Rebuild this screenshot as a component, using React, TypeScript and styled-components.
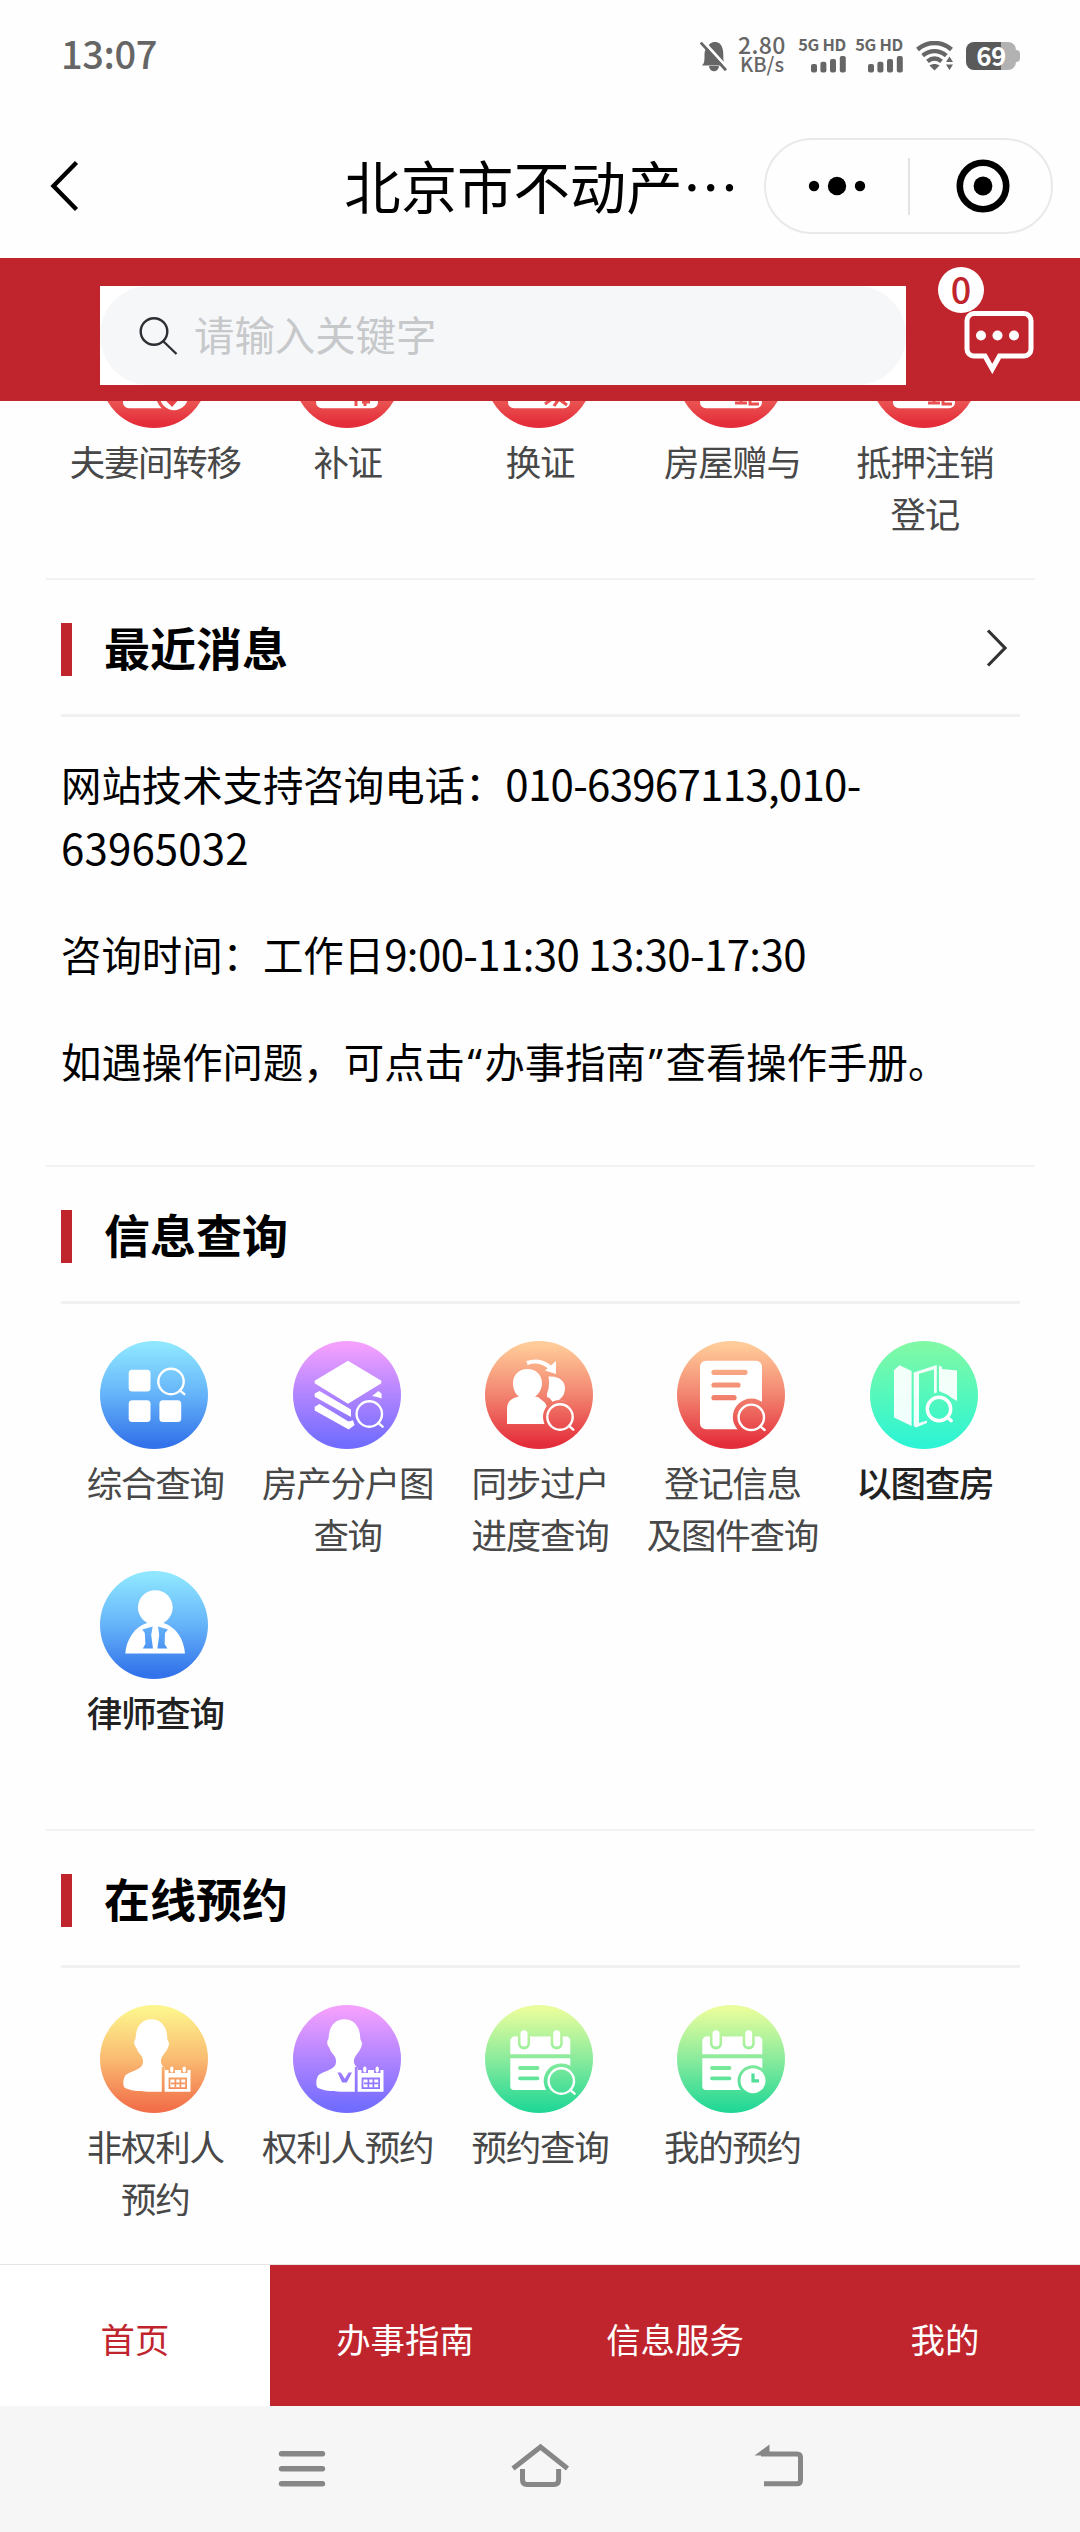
import React, { useId } from "react";
import styled, { createGlobalStyle } from "styled-components";

const RED = "#c0252e";
const CJK = '"Noto Sans CJK SC", "Noto Sans", sans-serif';

const GlobalStyle = createGlobalStyle`
  * { box-sizing: border-box; }
  html, body { margin: 0; padding: 0; background: #fff; }
  body { font-family: ${CJK}; color: #000; }
  p, h1, h2 { margin: 0; font-weight: 400; }
  svg { display: block; }
`;

const Screen = styled.div`
  width: 1080px;
  height: 2532px;
  display: flex;
  flex-direction: column;
  overflow: hidden;
  background: #fefefe;
`;

/* ---------- status bar ---------- */

const StatusBar = styled.div`
  height: 114px;
  padding: 0 60px 0 61px;
  display: flex;
  justify-content: space-between;
  align-items: flex-start;
  color: #666;
`;

const Clock = styled.div`
  margin-top: 27px;
  font-size: 38px;
  line-height: 52px;
  font-weight: 500;
  letter-spacing: -0.4px;
`;

const StatusIcons = styled.div`
  display: flex;
  padding-top: 35px;
  height: 80px;
`;

const NetSpeed = styled.div`
  width: 48px;
  margin-left: 11px;
  text-align: center;
  font-weight: 500;
  white-space: nowrap;
`;

const SpeedValue = styled.div`
  font-size: 23px;
  line-height: 18px;
  letter-spacing: 0.4px;
`;

const SpeedUnit = styled.div`
  font-size: 20px;
  line-height: 22px;
`;

const Signal = styled.div<{ $gap: number }>`
  width: 48px;
  margin-left: ${(p) => p.$gap}px;
  display: flex;
  flex-direction: column;
  align-items: flex-end;
`;

const SignalLabel = styled.div`
  font: 700 16.4px/19px ${CJK};
  white-space: nowrap;
  letter-spacing: -0.3px;
`;

const Battery = styled.div`
  width: 50px;
  height: 28px;
  margin: 7px 0 0 12px;
  border-radius: 8px;
  background: linear-gradient(90deg, #5a5a5a 71%, #b2b2b2 71%);
  color: #fff;
  font: 700 26px/26px ${CJK};
  letter-spacing: -0.5px;
  text-align: center;
`;

const BatteryTip = styled.div`
  width: 4px;
  height: 12px;
  margin-top: 15px;
  border-radius: 0 4px 4px 0;
  background: #b2b2b2;
`;

/* ---------- title bar ---------- */

const TitleBar = styled.header`
  height: 144px;
  display: flex;
  align-items: center;
  padding: 0 27px 0 46px;
`;

const PageTitle = styled.h1`
  margin: -2px 25px 0 auto;
  font-size: 56.4px;
  line-height: 80px;
`;

const Capsule = styled.div`
  width: 289px;
  height: 96px;
  border: 2px solid #e9e9e9;
  border-radius: 48px;
  display: grid;
  grid-template-columns: 1fr 2px 1fr;
  align-items: center;
  justify-items: center;
`;

const CapsuleDivider = styled.span`
  width: 2px;
  height: 57px;
  background: #e3e3e3;
`;

const CapsuleClose = styled.svg`
  margin-left: 5px;
`;

/* ---------- search ---------- */

const SearchBar = styled.div`
  height: 143px;
  flex: none;
  background: ${RED};
  display: flex;
  padding: 28px 0 0 100px;
`;

const SearchBox = styled.div`
  width: 806px;
  height: 99px;
  background: #fff;
`;

const SearchField = styled.div`
  height: 99px;
  border-radius: 50px;
  background: #f6f7f9;
  display: flex;
  align-items: center;
  gap: 16px;
  padding-left: 38px;
  color: #c6c8ca;
  font-size: 40.4px;
`;

const Placeholder = styled.span`
  line-height: 58px;
  margin-top: -4px;
`;

const MessageButton = styled.div`
  position: relative;
  margin: 25px 0 0 58px;
  width: 70px;
  height: 63px;
`;

const MessageBadge = styled.span`
  position: absolute;
  left: -26px;
  top: -44px;
  width: 46px;
  height: 46px;
  border-radius: 50%;
  background: #fff;
  color: ${RED};
  font-size: 36px;
  line-height: 42px;
  font-weight: 500;
  text-align: center;
`;

/* ---------- content ---------- */

const Content = styled.main`
  height: 1863px;
  flex: none;
  overflow: hidden;
  padding: 0 45px 0 46px;
`;

const HiddenTopGrid = styled.div`
  height: 177px;
  padding: 0 15px 0 12px;
  display: flex;
  align-items: flex-end;
`;

const Section = styled.section<{ $height: number }>`
  height: ${(p) => p.$height}px;
  border-top: 2px solid #f2f2f2;
  padding: 0 15px;
`;

const SectionHead = styled.div`
  height: 137px;
  border-bottom: 3px solid #f1f1f1;
  padding: 5px 13px 0 0;
  display: flex;
  align-items: center;
`;

const Accent = styled.span`
  width: 11px;
  height: 53px;
  background: ${RED};
`;

const SectionTitle = styled.h2`
  margin: -8px auto 0 32px;
  font-size: 46px;
  line-height: 60px;
  font-weight: 700;
`;

const News = styled.div`
  padding-top: 35px;
  display: flex;
  flex-direction: column;
  gap: 43px;
  font-size: 40.4px;
  line-height: 63.5px;
`;

const Num = styled.span<{ $spacing: number }>`
  font-size: 42px;
  line-height: 1;
  letter-spacing: ${(p) => p.$spacing}px;
`;

const Quote = styled.span`
  font-family: "Noto Sans", sans-serif;
  padding: 0 2.5px;
`;

const Grid = styled.div<{ $top: number }>`
  margin-left: -3px;
  padding-top: ${(p) => p.$top}px;
  display: grid;
  grid-template-columns: repeat(5, 192.4px);
  row-gap: 9px;
`;

const TopGrid = styled(Grid)`
  margin: 0;
  height: 258px;
`;

const Cell = styled.div`
  height: 221px;
  display: flex;
  flex-direction: column;
  align-items: center;
`;

const CellLabel = styled.div<{ $dark?: boolean }>`
  margin-top: 7px;
  padding-left: 2px;
  font-size: 35.5px;
  line-height: 52.4px;
  letter-spacing: -1.3px;
  text-align: center;
  white-space: pre-line;
  font-weight: ${(p) => (p.$dark ? 500 : 400)};
  color: ${(p) => (p.$dark ? "#222" : "#484848")};
`;

/* ---------- bottom ---------- */

const Tabs = styled.nav`
  height: 142px;
  flex: none;
  border-top: 1px solid #e8e4e4;
  display: grid;
  grid-template-columns: repeat(4, 1fr);
`;

const Tab = styled.div<{ $active?: boolean }>`
  display: flex;
  align-items: center;
  justify-content: center;
  padding-top: 5px;
  font-size: 34.4px;
  background: ${(p) => (p.$active ? "#fff" : RED)};
  color: ${(p) => (p.$active ? RED : "#fff")};
`;

const SystemNav = styled.div`
  flex: 1;
  background: #f6f6f6;
  display: flex;
  justify-content: center;
  gap: 179px;
  padding-top: 32px;
`;

/* ---------- icons ---------- */

const palettes = {
  blue: ["#8ee6ff", "#65b3f9", "#3272ea"],
  purple: ["#f3a0fd", "#b084ff", "#716cff"],
  red: ["#ffcb98", "#f28470", "#e42d3a"],
  teal: ["#80f9a6", "#55f8bc", "#2df4d4"],
  orange: ["#fdf48c", "#f9bb72", "#f26f49"],
  green: ["#e8fd9c", "#8aeb9c", "#23d896"],
};
type Palette = keyof typeof palettes;

function Lens({ x, y, r = 12.7, w = 2.4 }: { x: number; y: number; r?: number; w?: number }) {
  return (
    <g fill="none" stroke="#fff" strokeWidth={w} strokeLinecap="round">
      <circle cx={x} cy={y} r={r} />
      <path d={`M${x + r * 0.7} ${y + r * 0.7}L${x + r + 0.6} ${y + r}`} />
    </g>
  );
}

function Disc({
  tone,
  hole,
  cut,
  over,
  children,
}: {
  tone: Palette;
  hole?: [number, number, number];
  cut?: React.ReactNode;
  over?: React.ReactNode;
  children: React.ReactNode;
}) {
  const id = useId().replace(/[^a-zA-Z0-9]/g, "");
  const [a, b, c] = palettes[tone];
  return (
    <svg width="108" height="108" viewBox="0 0 108 108">
      <defs>
        <linearGradient id={`g${id}`} x1="0" y1="0" x2="0" y2="1">
          <stop offset="0.04" stopColor={a} />
          <stop offset="0.5" stopColor={b} />
          <stop offset="0.96" stopColor={c} />
        </linearGradient>
        <mask id={`m${id}`} maskUnits="userSpaceOnUse" x="0" y="0" width="108" height="108">
          <rect width="108" height="108" fill="#fff" />
          {hole && <circle cx={hole[0]} cy={hole[1]} r={hole[2]} fill="#000" />}
          {cut}
        </mask>
      </defs>
      <circle cx="54" cy="54" r="54" fill={`url(#g${id})`} />
      <g fill="#fff" mask={`url(#m${id})`}>
        {children}
      </g>
      {over}
    </svg>
  );
}

const DocIcon = ({ mark }: { mark: string }) => (
  <Disc tone="red" cut={<path d={mark} fill="none" stroke="#000" strokeWidth="3" />}>
    <rect x="23" y="20" width="62" height="68.3" rx="6" />
  </Disc>
);

const CoupleIcon = () => (
  <Disc
    tone="red"
    hole={[74, 75, 18]}
    over={
      <>
        <circle cx="74" cy="76" r="14.2" fill="#fff" />
        <path d="M66 78l6 6 9-10" fill="none" stroke="#e9444a" strokeWidth="4" />
      </>
    }
  >
    <rect x="23" y="20" width="62" height="68.3" rx="6" />
  </Disc>
);

const OverviewIcon = () => (
  <Disc tone="blue" over={<Lens x={71} y={40.5} />}>
    <rect x="28.7" y="28.7" width="21.8" height="21.8" rx="3.5" />
    <rect x="28.7" y="59.3" width="21.8" height="21.8" rx="3.5" />
    <rect x="59.4" y="59.3" width="21.8" height="21.8" rx="3.5" />
  </Disc>
);

const LayersIcon = () => (
  <Disc tone="purple" over={<Lens x={76.3} y={73} />}>
    <path
      d="M55 20.5L87.6 40.2V42L55 62L22.4 42V40.2Z"
      stroke="#fff"
      strokeWidth="1.4"
      strokeLinejoin="round"
    />
    <path d="M26.5 50L58 68.6V76L21.7 55.8V52.6Z" />
    <path d="M26.5 63L55.5 80.5L60 79.3L61.6 84L55.7 88.6L21.7 69.5V65.8Z" />
    <path d="M79 55L85.5 50L88.6 52.8V57.5L84 56Z" />
  </Disc>
);

const TransferIcon = () => (
  <Disc
    tone="red"
    hole={[75, 76, 17]}
    cut={
      <g fill="none" stroke="#000" strokeWidth="4">
        <path d="M57.5 27C64 35 64 49 57 57L66 64" strokeWidth="3.5" />
      </g>
    }
    over={
      <>
        <path d="M42 22C52 18.5 62 21.5 68 30" fill="none" stroke="#fff" strokeWidth="4" />
        <path d="M71 20V33L60 29.5Z" fill="#fff" />
        <Lens x={75} y={76} />
      </>
    }
  >
    <path d="M42.5 28C51 28 57 34 57 42C57 48 54 53 50 55.5C57 56.5 61 61 62 67V83H22V68C22 61 26 57 34 55.5C30 53 28 48 28 42C28 34 34 28 42.5 28Z" />
    <path d="M62 36C73 34 80 40 80 47C80 53 77 57 74 58.5L82 60.5L68 62C66 58 64 56 62 56Z" />
  </Disc>
);

const RecordIcon = () => (
  <Disc
    tone="red"
    hole={[74.3, 76, 18.5]}
    cut={
      <g stroke="#000" strokeWidth="5.2" strokeLinecap="round">
        <path d="M37 31.3H68M37 44H61M37 56.7H57" />
      </g>
    }
    over={<Lens x={74.3} y={76.3} />}
  >
    <rect x="23" y="19.7" width="62" height="68.6" rx="6" />
  </Disc>
);

const MapIcon = () => (
  <Disc tone="teal" hole={[69, 68, 16.5]} over={<Lens x={69} y={68} r={11.7} w={3.4} />}>
    <g opacity="0.92">
      <path d="M24 29L29.6 24.2L41.6 30V85L24 76.5Z" />
      <path d="M43.7 31.5L66.8 24V56H64V28.5L49 32.8V82L57 79.5V82L46 86.5L43.7 85Z" />
      <path d="M69 24.5L72 26V28L87 29.5V60L69 50Z" />
    </g>
  </Disc>
);

const LawyerIcon = () => (
  <Disc
    tone="blue"
    cut={
      <g fill="#000">
        <path d="M42.2 58.5L52.7 55.5L51.2 64L53 77.5H42.8L45.4 73L44.8 62Z" />
        <path d="M58 55.5L68 58.5L65 62L64.6 73L67.4 77.5H57.4L59.2 64Z" />
      </g>
    }
  >
    <ellipse cx="55.3" cy="36.5" rx="17.4" ry="17.2" />
    <path d="M47 45H63.5V52C76 56 84 68 85 82.5H25.3C26.5 68 35 55.5 47 52Z" />
  </Disc>
);

const PersonCalendarIcon = ({ tone, collar }: { tone: Palette; collar?: boolean }) => (
  <Disc
    tone={tone}
    cut={
      <>
        <path d="M63 62V88" stroke="#000" strokeWidth="2.4" />
        {collar && <path d="M44.5 67.5H47.8L51.8 73.8L55.5 67.5H59L53.8 77.5H49.2Z" fill="#000" />}
        <path
          d="M68.6 72.6H87V84H68.6ZM70.4 74.4V82.3H85.2V74.4Z"
          fill="#000"
          fillRule="evenodd"
        />
        <path d="M71 78.4H85M75.4 74V82.5M80.4 74V82.5" stroke="#000" strokeWidth="1.7" />
      </>
    }
  >
    <path d="M51.5 14.3C61 14.3 67.2 22 67.2 33C67.2 36 69.7 36 68.8 40C68 44 66 46 64 49C60.7 53 60 57 62 60L64.5 63V86.7H48C38 86.5 30 85.5 25 83C22.5 81.5 23 74 25 71C29 65.5 43.5 66 43 56C43 50 38 49 36.5 43C34.5 41 33 37 35.5 34C36 21 42 14.3 51.5 14.3Z" />
    <path d="M65 65H68.5V68H75V65H81V68H87.5V65H90.5V86.8H65Z" />
    <ellipse cx="71.8" cy="64.5" rx="1.7" ry="3.1" />
    <ellipse cx="84.2" cy="64.5" rx="1.7" ry="3.1" />
  </Disc>
);

const CalendarIcon = ({ clock }: { clock?: boolean }) => (
  <Disc
    tone="green"
    hole={clock ? [76, 75.7, 15.4] : [76.3, 76, 17.6]}
    cut={
      <g stroke="#000" strokeLinecap="round">
        <path d="M39 27V38.5M71.7 27V38.5" strokeWidth="12" />
        <path d="M35 63H52.5M35 73.3H52.5" strokeWidth="3.8" />
      </g>
    }
    over={
      <>
        <path
          d="M39 28.8V38M71.7 28.8V38"
          stroke="#fff"
          strokeWidth="7"
          strokeLinecap="round"
        />
        {clock ? (
          <>
            <circle cx="76" cy="75.7" r="12.5" fill="#fff" />
            <path d="M76 68.5V75.8H82" fill="none" stroke="#4fdd98" strokeWidth="3.2" />
          </>
        ) : (
          <Lens x={76.3} y={76} />
        )}
      </>
    }
  >
    <path d="M28 31.5H83L85.3 34.5V49.3H25.3V34.5Z" />
    <path d="M25.3 53.2H85.3V85H29C26.5 85 25.3 83.5 25.3 81.5Z" />
  </Disc>
);

const BellSvg = styled.svg`
  margin-top: 5px;
`;

const BellOff = () => (
  <BellSvg width="27" height="32" viewBox="0 0 27 32">
    <path
      d="M2 25.5C4.5 23 4.5 21 4.5 15C4.5 9 7.5 5.7 11 3C13 1.5 17 1.5 19 3C22 5.5 23.3 9 23.3 15C23.3 21 23.6 23 26 25.5Z"
      fill="#666"
    />
    <path d="M9 26H19C18.5 33 9.5 33 9 26Z" fill="#666" />
    <path d="M2.5 0.5L28 28.5" stroke="#fff" strokeWidth="3" />
    <path d="M0.8 2.6L26 30.2" stroke="#666" strokeWidth="2.8" />
  </BellSvg>
);

const BarsSvg = styled.svg`
  margin-top: 1px;
`;

const SignalBars = () => (
  <BarsSvg width="35" height="18" viewBox="0 0 35 18" fill="#666">
    <rect x="0" y="9" width="6" height="8.5" rx="2" />
    <rect x="9.4" y="6.8" width="6" height="10.7" rx="2" />
    <rect x="19" y="4" width="6" height="13.5" rx="2" />
    <rect x="28.8" y="1" width="6" height="16.5" rx="2" />
  </BarsSvg>
);

const WifiSvg = styled.svg`
  margin: 6px 0 0 13px;
`;

const Wifi = () => (
  <WifiSvg width="38" height="30" viewBox="0 0 38 30" fill="none" stroke="#666" strokeWidth="4.4">
    <path d="M1.5 8.5C11.5 -0.2 25.5 -0.2 35.5 8.5" />
    <path d="M6.7 14.6C14 8.6 23 8.6 30.3 14.6" />
    <path d="M11.5 20.4C16 16.8 21 16.8 25.5 20.4" />
    <path d="M18.5 29.5L13.5 24.6C16.5 22.6 20.5 22.6 23.5 24.6Z" fill="#666" stroke="none" />
    <path d="M33.5 15.5L37 21H30ZM33.5 29L37 23.5H30Z" fill="#666" stroke="none" />
  </WifiSvg>
);

type Item = { label: string; icon: React.ReactNode; dark?: boolean };

const transferItems: Item[] = [
  { label: "夫妻间转移", icon: <CoupleIcon /> },
  { label: "补证", icon: <DocIcon mark="M63 78V86M72 78V86M69 82H77" /> },
  { label: "换证", icon: <DocIcon mark="M60 84L67 79M70 80H80M74 79L69 86M75 80L82 85" /> },
  { label: "房屋赠与", icon: <DocIcon mark="M58 83H70M64 79V84M73 80V84H82" /> },
  { label: "抵押注销\n登记", icon: <DocIcon mark="M58 83H70M64 79V84M73 80V84H82" /> },
];

const queryItems: Item[] = [
  { label: "综合查询", icon: <OverviewIcon /> },
  { label: "房产分户图\n查询", icon: <LayersIcon /> },
  { label: "同步过户\n进度查询", icon: <TransferIcon /> },
  { label: "登记信息\n及图件查询", icon: <RecordIcon /> },
  { label: "以图查房", icon: <MapIcon />, dark: true },
  { label: "律师查询", icon: <LawyerIcon />, dark: true },
];

const bookingItems: Item[] = [
  { label: "非权利人\n预约", icon: <PersonCalendarIcon tone="orange" /> },
  { label: "权利人预约", icon: <PersonCalendarIcon tone="purple" collar /> },
  { label: "预约查询", icon: <CalendarIcon /> },
  { label: "我的预约", icon: <CalendarIcon clock /> },
];

const Cells = ({ items }: { items: Item[] }) => (
  <>
    {items.map((it) => (
      <Cell key={it.label}>
        {it.icon}
        <CellLabel $dark={it.dark}>{it.label}</CellLabel>
      </Cell>
    ))}
  </>
);

const MoreArrow = styled.svg`
  margin-top: -3px;
`;

const Head = ({ title, more }: { title: string; more?: boolean }) => (
  <SectionHead>
    <Accent />
    <SectionTitle>{title}</SectionTitle>
    {more && (
      <MoreArrow width="21" height="38" viewBox="0 0 21 38" fill="none" stroke="#333" strokeWidth="3.2">
        <path d="M2 1.5L19 19L2 36.5" />
      </MoreArrow>
    )}
  </SectionHead>
);

export default function App() {
  return (
    <Screen lang="zh-CN">
      <GlobalStyle />
      <StatusBar>
        <Clock>13:07</Clock>
        <StatusIcons>
          <BellOff />
          <NetSpeed>
            <SpeedValue>2.80</SpeedValue>
            <SpeedUnit>KB/s</SpeedUnit>
          </NetSpeed>
          <Signal $gap={12}>
            <SignalLabel>5G HD</SignalLabel>
            <SignalBars />
          </Signal>
          <Signal $gap={9}>
            <SignalLabel>5G HD</SignalLabel>
            <SignalBars />
          </Signal>
          <Wifi />
          <Battery>69</Battery>
          <BatteryTip />
        </StatusIcons>
      </StatusBar>

      <TitleBar>
        <svg width="36" height="52" viewBox="0 0 36 52" fill="none" stroke="#000" strokeWidth="4.4">
          <path d="M30.5 2.5L7.5 26L30.5 49.5" />
        </svg>
        <PageTitle>北京市不动产…</PageTitle>
        <Capsule>
          <svg width="58" height="20" viewBox="0 0 58 20">
            <circle cx="6" cy="10" r="5.2" />
            <circle cx="29" cy="10" r="9.2" />
            <circle cx="52" cy="10" r="5.2" />
          </svg>
          <CapsuleDivider />
          <CapsuleClose width="54" height="54" viewBox="0 0 54 54">
            <circle cx="27" cy="27" r="23.2" fill="none" stroke="#000" strokeWidth="6.6" />
            <circle cx="27" cy="27" r="9.4" />
          </CapsuleClose>
        </Capsule>
      </TitleBar>

      <SearchBar>
        <SearchBox>
          <SearchField>
            <svg width="40" height="40" viewBox="0 0 40 40" fill="none" stroke="#2c2f33" strokeWidth="2.4">
              <circle cx="16" cy="15.5" r="13.3" />
              <path d="M25 25L38.5 38" />
            </svg>
            <Placeholder>请输入关键字</Placeholder>
          </SearchField>
        </SearchBox>
        <MessageButton>
          <svg width="70" height="63" viewBox="0 0 70 63">
            <path
              d="M10 2.6H60A7 7 0 0 1 67 9.6V38A7 7 0 0 1 60 45H35.5L28.3 58L21 45H10A7 7 0 0 1 3 38V9.6A7 7 0 0 1 10 2.6Z"
              fill="none"
              stroke="#fff"
              strokeWidth="5"
            />
            <g fill="#fff">
              <circle cx="17" cy="24.5" r="5" />
              <circle cx="33.5" cy="24.5" r="5" />
              <circle cx="50" cy="24.5" r="5" />
            </g>
          </svg>
          <MessageBadge>0</MessageBadge>
        </MessageButton>
      </SearchBar>

      <Content>
        <HiddenTopGrid>
          <TopGrid $top={0}>
            <Cells items={transferItems} />
          </TopGrid>
        </HiddenTopGrid>

        <Section $height={587}>
          <Head title="最近消息" more />
          <News>
            <p>
              网站技术支持咨询电话：<Num $spacing={-0.7}>010-63967113,010-</Num>
              <br />
              <Num $spacing={0.15}>63965032</Num>
            </p>
            <p>
              咨询时间：工作日<Num $spacing={-0.6}>9:00-11:30 13:30-17:30</Num>
            </p>
            <p>
              如遇操作问题，可点击<Quote>“</Quote>办事指南<Quote>”</Quote>查看操作手册。
            </p>
          </News>
        </Section>

        <Section $height={664}>
          <Head title="信息查询" />
          <Grid $top={37}>
            <Cells items={queryItems} />
          </Grid>
        </Section>

        <Section $height={435}>
          <Head title="在线预约" />
          <Grid $top={37}>
            <Cells items={bookingItems} />
          </Grid>
        </Section>
      </Content>

      <Tabs>
        <Tab $active>首页</Tab>
        <Tab>办事指南</Tab>
        <Tab>信息服务</Tab>
        <Tab>我的</Tab>
      </Tabs>

      <SystemNav>
        <svg width="60" height="60" viewBox="0 0 60 60" stroke="#878787" strokeWidth="5.4" strokeLinecap="round">
          <path d="M10.5 15.7H51.5M10.5 30.8H51.5M10.5 45.8H51.5" />
        </svg>
        <svg width="60" height="60" viewBox="0 0 60 60" fill="none" stroke="#878787" strokeWidth="5">
          <path d="M3 30.5L30.5 9L57.5 30.5" />
          <path d="M12.5 31V42Q12.5 46.4 17 46.4H44Q48.6 46.4 48.6 42V31" />
        </svg>
        <svg width="60" height="60" viewBox="0 0 60 60" fill="none" stroke="#878787" strokeWidth="5">
          <path d="M12 16H48Q51.5 16 51.5 19.5V42Q51.5 45.8 48 45.8H15" />
          <path d="M5.5 17.5L20.5 6.5V17.5Z" fill="#878787" stroke="none" />
        </svg>
      </SystemNav>
    </Screen>
  );
}
